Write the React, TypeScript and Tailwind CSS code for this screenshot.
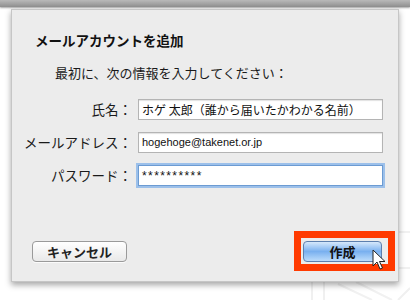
import React from 'react';

const jp = { fontFamily: '"Noto Sans CJK JP", "Noto Sans", sans-serif' };

const Field = ({ label, children, focused }: { label: string; children: React.ReactNode; focused?: boolean }) => (
  <div className="flex items-center h-[21px]">
    <div className="w-[120px] text-right text-[13.5px] leading-[21px] text-[#1a1a1a] whitespace-nowrap">{label}</div>
    <div
      className={`ml-[6px] w-[245px] h-[21px] bg-white flex items-center pl-[3px] text-[#111] ${
        focused
          ? 'border border-[#6c9bd2] shadow-[0_0_0_2px_#9cc0ea]'
          : 'border border-[#b4b4b4] shadow-[inset_0_1px_1px_rgba(0,0,0,0.12)]'
      }`}
    >
      {children}
    </div>
  </div>
);

export default function App() {
  return (
    <div className="relative w-[410px] h-[300px] bg-white overflow-hidden" style={jp}>
      {/* faint background artwork */}
      <svg className="absolute left-0 top-0" width="410" height="300">
        <path d="M312 282 L312 300 M324 282 L324 300" stroke="#f0f0f0" strokeWidth="2" fill="none" />
        <path d="M338 284 L372 300 M356 282 L392 300" stroke="#f1f1f1" strokeWidth="2" fill="none" />
        <path d="M399 232 L410 232 M399 268 L410 268" stroke="#f1f1f1" strokeWidth="2" fill="none" />
        <path d="M398 300 L410 288" stroke="#f0f0f0" strokeWidth="2" fill="none" />
      </svg>

      <div className="relative h-[7px] bg-gradient-to-b from-[#b9b9b9] to-[#8f8f8f] shadow-[0_1px_2px_rgba(0,0,0,0.35)]" />

      <div className="relative ml-[11px] mt-[2px] w-[388px] h-[273px] bg-[#ececec] border border-[#c6c6c6] shadow-[0_3px_6px_rgba(0,0,0,0.35)] flex flex-col">
        <div className="pl-[23px] pt-[21px] text-[13.5px] leading-[18px] font-bold text-[#111]">メールアカウントを追加</div>
        <div className="pl-[43px] mt-[15px] text-[13px] leading-[18px] text-[#1a1a1a]">最初に、次の情報を入力してください：</div>

        <div className="mt-[17px] flex flex-col gap-[12px]">
          <Field label="氏名：">
            <span className="text-[12px]">ホゲ 太郎（誰から届いたかわかる名前）</span>
          </Field>
          <Field label="メールアドレス：">
            <span className="text-[11px]" style={{ fontFamily: '"Liberation Sans", sans-serif' }}>hogehoge@takenet.or.jp</span>
          </Field>
          <Field label="パスワード：" focused>
            <span className="text-[12px] tracking-[1.4px]" style={{ fontFamily: '"Liberation Sans", sans-serif' }}>**********</span>
          </Field>
        </div>

        <div className="flex-1" />

        <div className="flex items-center justify-between pl-[20px] pr-[3px] pb-[10px]">
          <button className="w-[95px] h-[21px] rounded-[4px] border border-[#9a9a9a] bg-gradient-to-b from-white to-[#e9e9e9] text-[13px] font-bold text-[#222] leading-none shadow-[0_1px_0_rgba(255,255,255,0.8)]">
            キャンセル
          </button>
          <div className="w-[101px] h-[40px] border-[7px] border-[#ff3a00] flex items-center pl-[2px]">
            <button className="w-[79px] h-[21px] rounded-[4px] border border-[#5d7fae] bg-gradient-to-b from-[#d6e8fb] via-[#79b0ef] to-[#bcdcfb] text-[13px] font-bold text-[#111] leading-none">
              作成
            </button>
          </div>
        </div>
      </div>

      {/* mouse pointer */}
      <svg className="absolute left-[372px] top-[249px]" width="16" height="22" viewBox="0 0 16 22">
        <path d="M1 1 L1 17 L5 13 L8 20 L10.5 19 L7.5 12.5 L13 12.5 Z" fill="#ffffff" stroke="#222" strokeWidth="1" strokeLinejoin="round" />
      </svg>
    </div>
  );
}
